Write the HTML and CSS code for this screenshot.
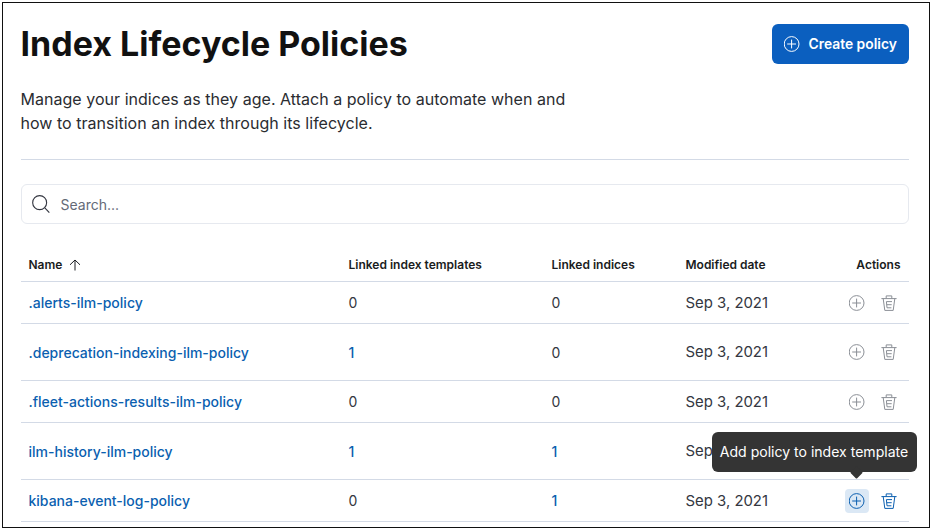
FILE: index.html
```html
<!DOCTYPE html>
<html lang="en">
<head>
    <meta charset="UTF-8">
    <meta name="viewport" content="width=device-width, initial-scale=1.0">
    <title>Index Lifecycle Policies</title>
    <link rel="stylesheet" href="styles.css">
</head>
<body>
    <svg class="icon-defs" width="0" height="0">
        <symbol id="plus-circle" viewBox="0 0 16 16">
            <circle cx="7.6" cy="8" r="7.4" fill="none" stroke="currentColor"/>
            <path d="M7.6 3.6v8.8M3.2 8h8.8" fill="none" stroke="currentColor"/>
        </symbol>
        <symbol id="trash" viewBox="0 0 16 16">
            <path d="M.4 3.6h15.2M5.2 3.4V.9h5.6v2.5M2.2 3.6l1.6 11.8h8.4l1.6-11.8M5.4 6.6h5.6M5.4 6.6l.6 6.2h4.4M5.8 9.7h4.9" fill="none" stroke="currentColor"/>
        </symbol>
    </svg>
    <div class="frame">
        <header class="page-header">
            <h1>Index Lifecycle Policies</h1>
            <button type="button" class="create-btn">
                <svg class="icon"><use href="#plus-circle"/></svg>
                Create policy
            </button>
        </header>
        <p class="intro">Manage your indices as they age. Attach a policy to automate when and<br>how to transition an index through its lifecycle.</p>
        <hr class="rule">

        <div class="search">
            <svg class="search-icon" viewBox="0 0 16 16"><circle cx="6.8" cy="6.8" r="6.2" fill="none" stroke="currentColor"/><path d="M11.4 11.4l4 4.2" fill="none" stroke="currentColor"/></svg>
            <span>Search...</span>
        </div>

        <table class="policies">
            <thead>
                <tr>
                    <th class="col-name">Name <svg class="sort-icon" viewBox="0 0 12 12"><path d="M6 11.5V1M1 5.8L6 1l5 4.8" fill="none" stroke="currentColor"/></svg></th>
                    <th class="col-templates">Linked index templates</th>
                    <th class="col-indices">Linked indices</th>
                    <th class="col-date">Modified date</th>
                    <th class="col-actions">Actions</th>
                </tr>
            </thead>
            <tbody>
                <tr class="short">
                    <td><a href="#">.alerts-ilm-policy</a></td>
                    <td>0</td>
                    <td>0</td>
                    <td>Sep 3, 2021</td>
                    <td class="col-actions"><span class="action"><svg class="icon"><use href="#plus-circle"/></svg></span><span class="action"><svg class="icon"><use href="#trash"/></svg></span></td>
                </tr>
                <tr class="tall">
                    <td><a href="#">.deprecation-indexing-ilm-policy</a></td>
                    <td><a href="#">1</a></td>
                    <td>0</td>
                    <td>Sep 3, 2021</td>
                    <td class="col-actions"><span class="action"><svg class="icon"><use href="#plus-circle"/></svg></span><span class="action"><svg class="icon"><use href="#trash"/></svg></span></td>
                </tr>
                <tr class="short">
                    <td><a href="#">.fleet-actions-results-ilm-policy</a></td>
                    <td>0</td>
                    <td>0</td>
                    <td>Sep 3, 2021</td>
                    <td class="col-actions"><span class="action"><svg class="icon"><use href="#plus-circle"/></svg></span><span class="action"><svg class="icon"><use href="#trash"/></svg></span></td>
                </tr>
                <tr class="tall">
                    <td><a href="#">ilm-history-ilm-policy</a></td>
                    <td><a href="#">1</a></td>
                    <td><a href="#">1</a></td>
                    <td>Sep</td>
                    <td class="col-actions"><span class="action"><svg class="icon"><use href="#plus-circle"/></svg></span><span class="action"><svg class="icon"><use href="#trash"/></svg></span></td>
                </tr>
                <tr class="short">
                    <td><a href="#">kibana-event-log-policy</a></td>
                    <td>0</td>
                    <td><a href="#">1</a></td>
                    <td>Sep 3, 2021</td>
                    <td class="col-actions active"><span class="action hovered"><svg class="icon"><use href="#plus-circle"/></svg><span class="tooltip">Add policy to index template</span></span><span class="action"><svg class="icon"><use href="#trash"/></svg></span></td>
                </tr>
            </tbody>
        </table>
    </div>
</body>
</html>
```

FILE: styles.css
```css
/* Reset */
body, h1, p, hr, button {
    margin: 0;
    padding: 0;
}

html, body {
    height: 100%;
    overflow: hidden;
}

body {
    background: white;
    color: #1a1c21;
    font-family: Inter, "Liberation Sans", sans-serif;
    font-size: 14px;
}

.icon-defs {
    position: absolute;
}

.frame {
    height: 526px;
    margin: 2px;
    box-sizing: border-box;
    width: 928px;
    border: 1.5px solid #111;
    padding: 20.5px 20.5px 0 17.5px;
    overflow: hidden;
}

/* Header */
.page-header {
    display: flex;
    justify-content: space-between;
    align-items: flex-start;
    height: 54px;
}

h1 {
    font-size: 34px;
    line-height: 40px;
    font-weight: 700;
    color: #111;
}

.create-btn {
    display: flex;
    align-items: center;
    gap: 9px;
    width: 137px;
    height: 40px;
    padding-left: 12px;
    box-sizing: border-box;
    border: none;
    border-radius: 6px;
    background: #0b5fbf;
    color: white;
    font-family: inherit;
    font-size: 13.85px;
    font-weight: 600;
}

.icon {
    display: block;
    width: 16px;
    height: 16px;
}

.intro {
    margin-top: 9.5px;
    font-size: 16px;
    line-height: 24px;
    letter-spacing: 0.03px;
    color: #2a2c31;
}

.rule {
    border: none;
    border-top: 1px solid #d3dae6;
    margin-top: 24px;
}

/* Search box */
.search {
    display: flex;
    align-items: center;
    gap: 10.5px;
    height: 40px;
    margin-top: 24px;
    padding-left: 10.5px;
    box-sizing: border-box;
    border: 1px solid #e6e9ef;
    border-radius: 6px;
    color: #646a77;
}

.search-icon {
    width: 18px;
    height: 18px;
    color: #343741;
}

/* Table */
.policies {
    width: 888px;
    margin-top: 23px;
    border-collapse: collapse;
    table-layout: fixed;
}

.policies th {
    height: 34px;
    padding: 0 8px;
    text-align: left;
    font-size: 12px;
    font-weight: 600;
    color: #1a1c21;
    border-bottom: 1px solid #d3dae6;
}

.policies td {
    padding: 0 8px;
    border-bottom: 1px solid #d3dae6;
    color: #343741;
}

.short td {
    height: 41px;
}

.tall td {
    height: 56px;
}

.policies a {
    color: #0b5fb0;
    font-weight: 500;
    text-decoration: none;
}

.col-name {
    width: 304px;
}

.col-templates {
    width: 187px;
}

.col-indices {
    width: 118px;
}

.col-date {
    width: 120px;
}

.policies td:nth-child(4) {
    font-size: 14.9px;
}

.sort-icon {
    width: 12px;
    height: 12px;
    margin-left: 4px;
    vertical-align: -2px;
}

.policies .col-actions {
    text-align: right;
}

.policies td.col-actions {
    padding-right: 0;
    font-size: 0;
}

/* Action icons */
.action {
    display: inline-flex;
    align-items: center;
    justify-content: center;
    position: relative;
    width: 24px;
    height: 24px;
    margin-right: 8px;
    color: #8b8f96;
    vertical-align: middle;
}

.active .action {
    color: #0b5fb0;
}

.action.hovered {
    background: #dbe8f5;
    border-radius: 4px;
}

.tooltip {
    position: absolute;
    right: -48px;
    bottom: 41px;
    width: 205px;
    height: 40px;
    line-height: 40px;
    text-align: center;
    border-radius: 6px;
    background: #343434;
    color: white;
    font-size: 14.05px;
    white-space: nowrap;
}

.tooltip:after {
    content: '';
    position: absolute;
    right: 55.5px;
    top: 36px;
    width: 9px;
    height: 9px;
    background: #343434;
    transform: rotate(45deg);
    border-radius: 1px;
}
```
